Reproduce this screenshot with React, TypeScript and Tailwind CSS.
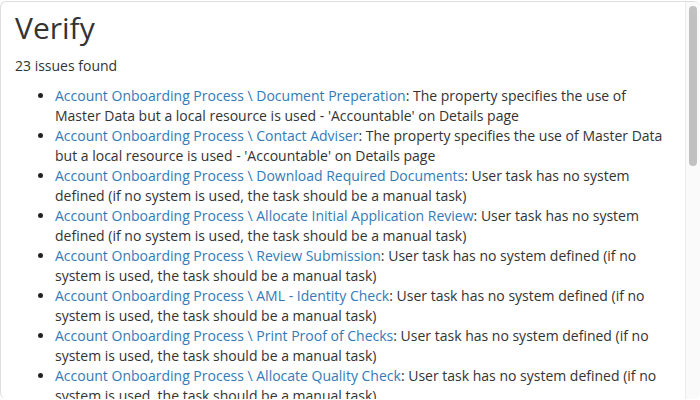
const SYSTEM_MSG =
  'User task has no system defined (if no system is used, the task should be a manual task)'
const MASTER_MSG =
  "The property specifies the use of Master Data but a local resource is used - 'Accountable' on Details page"

const issues = [
  { task: 'Document Preperation', msg: MASTER_MSG },
  { task: 'Contact Adviser', msg: MASTER_MSG },
  { task: 'Download Required Documents', msg: SYSTEM_MSG },
  { task: 'Allocate Initial Application Review', msg: SYSTEM_MSG },
  { task: 'Review Submission', msg: SYSTEM_MSG },
  { task: 'AML - Identity Check', msg: SYSTEM_MSG },
  { task: 'Print Proof of Checks', msg: SYSTEM_MSG },
  { task: 'Allocate Quality Check', msg: SYSTEM_MSG },
  { task: 'Quality Check', msg: SYSTEM_MSG },
  { task: 'Open Account', msg: SYSTEM_MSG },
]

export default function App() {
  return (
    <div className="h-[400px] w-[700px] overflow-hidden bg-white pt-px font-['Open_Sans',sans-serif] text-[14px] leading-[20px] text-[#333]">
      <div className="flex h-[398px] rounded-md border-t border-l border-[#dedede] overflow-hidden">
        <div className="min-w-0 flex-1 overflow-hidden pl-[14px] pr-[15px]">
          <h1 className="mt-[8px] text-[30px] leading-[36px] text-[#333]">Verify</h1>
          <p className="mt-[10px]">23 issues found</p>
          <ul className="mt-[10px] list-disc pl-[40px] marker:text-[#222]">
            {issues.map((it) => (
              <li key={it.task}>
                <a href="#" className="text-[#337ab7]">
                  Account Onboarding Process \ {it.task}
                </a>
                : {it.msg}
              </li>
            ))}
          </ul>
        </div>
        <div className="w-[15px] shrink-0 border-l border-[#ececec] bg-[#fafafa] pt-[4px] pl-[3px]">
          <div className="h-[160px] w-[8px] rounded-full bg-[#c1c1c1]" />
        </div>
      </div>
    </div>
  )
}
